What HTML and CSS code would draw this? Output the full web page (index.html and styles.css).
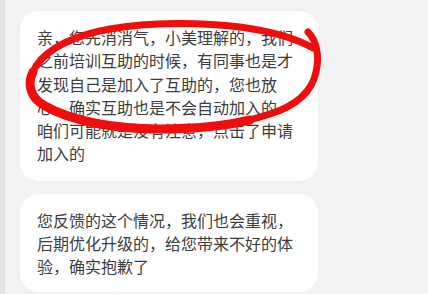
FILE: index.html
```html
<!DOCTYPE html>
<html lang="zh-CN">
<head>
<meta charset="utf-8">
<link rel="stylesheet" href="styles.css">
</head>
<body>
<div class="page">
  <div class="chat">
    <div class="bubble">亲，您先消消气，小美理解的，我们<br>之前培训互助的时候，有同事也是才<br>发现自己是加入了互助的，您也放<br>心，确实互助也是不会自动加入的<br>咱们可能就是没有注意，点击了申请<br>加入的</div>
    <div class="bubble bubble-last">您反馈的这个情况，我们也会重视，<br>后期优化升级的，给您带来不好的体<br>验，确实抱歉了</div>
  </div>
  <svg class="mark" width="428" height="294" viewBox="0 0 428 294">
    <path d="M 308 32 C 316 40, 320 55, 316 72 C 312 92, 295 106, 270 114 C 240 124, 200 129, 160 129 C 110 129, 70 120, 45 106 C 28 97, 26 82, 36 66 C 48 48, 75 35, 110 29 C 150 22, 200 22, 240 27 C 270 31, 295 38, 313 48" fill="none" stroke="#f20d0d" stroke-width="7" stroke-linecap="round" stroke-linejoin="round"/>
    <path d="M 250 120 C 220 127, 190 129, 160 129 C 110 129, 70 120, 45 106 C 30 98, 27 84, 33 72" fill="none" stroke="#f20d0d" stroke-width="9" stroke-linecap="round"/>
  </svg>
</div>
</body>
</html>
```
FILE: styles.css
```css
html, body {
  margin: 0;
  padding: 0;
}
body {
  background: #f2f2f4;
  font-family: "Noto Sans CJK SC", "Noto Sans", sans-serif;
}
.page {
  position: relative;
  width: 428px;
  height: 294px;
  overflow: hidden;
  box-sizing: border-box;
  border-left: 5px solid #e5e5e7;
}
.chat {
  display: flex;
  flex-direction: column;
  gap: 13px;
  padding: 11px 0 0 15px;
}
.bubble {
  width: 298px;
  box-sizing: border-box;
  background: #ffffff;
  border-radius: 19px;
  padding: 15px 10px 15px 17px;
  font-size: 16px;
  line-height: 23.3px;
  color: #3d3d3d;
  white-space: nowrap;
}
.bubble-last {
  padding-bottom: 13px;
}
.mark {
  position: absolute;
  left: -5px;
  top: 0;
  pointer-events: none;
}
```
